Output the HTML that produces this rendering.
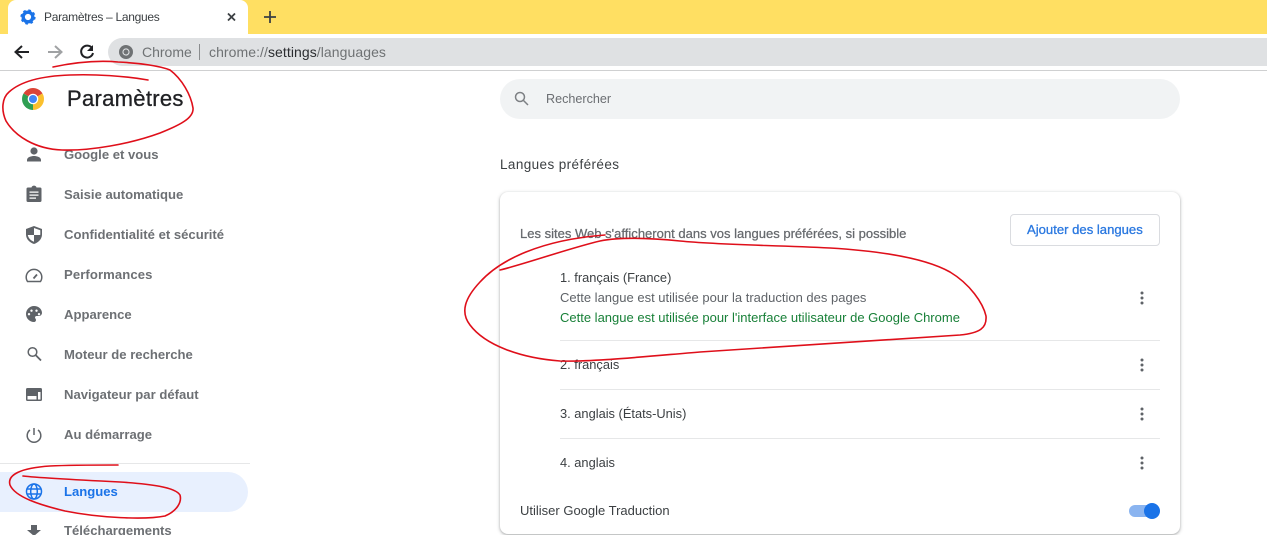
<!DOCTYPE html>
<html lang="fr"><head><meta charset="utf-8"><title>Paramètres – Langues</title>
<style>
html,body{margin:0;padding:0;background:#fff}
#p{position:relative;width:1267px;height:535px;overflow:hidden;background:#fff;font-family:"Liberation Sans",sans-serif;color:#5f6368;font-size:13px}
.t{position:absolute;white-space:nowrap;line-height:16px}
.nav{font-weight:700;color:#6d7074;left:64px;font-size:13.1px}
.dk{color:#3c4043;font-size:12.85px}
.a{position:absolute;left:0;top:0}
.hr{position:absolute;height:1px;background:#e6e7e8}
</style></head><body><div id="p">
<div style="position:absolute;left:0;top:0;width:1267px;height:34px;background:#ffdf62"></div>
<div style="position:absolute;left:8px;top:0;width:240px;height:34px;background:#fff;border-radius:8px 8px 0 0"></div>
<div style="position:absolute;left:0;top:34px;width:1267px;height:36px;background:#fff"></div>
<div style="position:absolute;left:108px;top:38px;width:1159px;height:28px;background:#dfe1e3;border-radius:14px 0 0 14px"></div>
<div style="position:absolute;left:0;top:70px;width:1267px;height:1px;background:#cfd0d1"></div>
<div class="t" style="left:44px;top:9px;font-size:12px;color:#3c4043;letter-spacing:-.3px">Paramètres – Langues</div>
<div class="t" style="left:142px;top:44px;font-size:14px;color:#6f7274">Chrome</div>
<div style="position:absolute;left:199px;top:44px;width:1px;height:16px;background:#8a8c8e"></div>
<div class="t" style="left:209px;top:44px;font-size:14px;color:#6f7274;letter-spacing:.07px">chrome://<span style="color:#2b2d30">settings</span>/languages</div>
<div class="t" style="left:67px;top:87px;font-size:22px;line-height:24px;color:#202124;letter-spacing:.3px;-webkit-text-stroke:.3px #202124">Paramètres</div>
<div style="position:absolute;left:500px;top:79px;width:680px;height:40px;border-radius:20px;background:#f1f3f4"></div>
<div class="t" style="left:546px;top:91px;font-size:12.6px;color:#6b6e72">Rechercher</div>
<div class="t" style="left:500px;top:157px;font-size:13.5px;color:#3c4043;letter-spacing:.4px">Langues préférées</div>
<div style="position:absolute;left:500px;top:192px;width:680px;height:342px;border-radius:8px;background:#fff;box-shadow:0 1px 2px rgba(60,64,67,.3),0 1px 3px 1px rgba(60,64,67,.15)"></div>
<div class="t" style="left:520px;top:226px;font-size:13px;letter-spacing:.01px;color:#66696d;-webkit-text-stroke:.25px #66696d">Les sites Web s'afficheront dans vos langues préférées, si possible</div>
<div style="position:absolute;left:1010px;top:214px;width:148px;height:30px;border:1px solid #dadce0;border-radius:4px;background:#fff"></div>
<div class="t" style="left:1027px;top:222px;font-size:13.1px;color:#2a78e0;-webkit-text-stroke:.3px #2a78e0">Ajouter des langues</div>
<div class="t dk" style="left:560px;top:270px">1. français (France)</div>
<div class="t" style="left:560px;top:290px;font-size:13px">Cette langue est utilisée pour la traduction des pages</div>
<div class="t" style="left:560px;top:310px;font-size:13px;color:#188038">Cette langue est utilisée pour l'interface utilisateur de Google Chrome</div>
<div class="hr" style="left:560px;top:340px;width:600px"></div>
<div class="t dk" style="left:560px;top:357px">2. français</div>
<div class="hr" style="left:560px;top:389px;width:600px"></div>
<div class="t dk" style="left:560px;top:406px">3. anglais (États-Unis)</div>
<div class="hr" style="left:560px;top:438px;width:600px"></div>
<div class="t dk" style="left:560px;top:455px">4. anglais</div>
<div class="t dk" style="left:520px;top:503px;font-size:13px">Utiliser Google Traduction</div>
<div style="position:absolute;left:1129px;top:505px;width:28px;height:12px;border-radius:6px;background:#8ab4f0"></div>
<div style="position:absolute;left:1144px;top:503px;width:16px;height:16px;border-radius:50%;background:#1a73e8"></div>
<div style="position:absolute;left:0;top:472px;width:248px;height:40px;border-radius:0 20px 20px 0;background:#e8f0fe"></div>
<div class="hr" style="left:0;top:463px;width:250px"></div>
<div class="t nav" style="top:147px">Google et vous</div>
<div class="t nav" style="top:187px">Saisie automatique</div>
<div class="t nav" style="top:227px">Confidentialité et sécurité</div>
<div class="t nav" style="top:267px;letter-spacing:.1px">Performances</div>
<div class="t nav" style="top:307px">Apparence</div>
<div class="t nav" style="top:347px">Moteur de recherche</div>
<div class="t nav" style="top:387px">Navigateur par défaut</div>
<div class="t nav" style="top:427px">Au démarrage</div>
<div class="t nav" style="top:484px;color:#1a73e8">Langues</div>
<div class="t nav" style="top:523px">Téléchargements</div>
<svg class="a" width="1267" height="535" viewBox="0 0 1267 535" xmlns="http://www.w3.org/2000/svg">
<!-- tab gear -->
<g transform="translate(28,17)"><circle r="4.800" fill="none" stroke="#1a73e8" stroke-width="3.400"/><circle r="6.600" fill="none" stroke="#1a73e8" stroke-width="2" stroke-dasharray="2.600 2.600"/></g>
<path d="M228 13.500l7 7M235 13.500l-7 7" stroke="#3c4043" stroke-width="1.800"/>
<path d="M270 11v12M264 17h12" stroke="#3c4043" stroke-width="1.800"/>
<!-- nav arrows -->
<path d="M29 52H16M22 46l-6.500 6 6.500 6" fill="none" stroke="#202124" stroke-width="2"/>
<path d="M48 52h13M55 46l6.500 6-6.500 6" fill="none" stroke="#a0a2a4" stroke-width="2"/>
<path d="M92 48a6 6 0 1 0 1 5" fill="none" stroke="#202124" stroke-width="2"/><path d="M93 45v6h-6z" fill="#202124"/>
<!-- omnibox chrome icon -->
<circle cx="126" cy="52" r="7" fill="#6f7274"/><circle cx="126" cy="52" r="3.600" fill="#dfe1e3"/><circle cx="126" cy="52" r="2.500" fill="#6f7274"/>
<!-- logo -->
<path d="M33 99L23.500 93.500A11 11 0 0 1 42.500 93.500Z" fill="#db4437"/>
<path d="M33 99L42.500 93.500A11 11 0 0 1 33 110Z" fill="#fbc02d"/>
<path d="M33 99L33 110A11 11 0 0 1 23.500 93.500Z" fill="#2f9e52"/>
<circle cx="33" cy="99" r="5.300" fill="#fff"/><circle cx="33" cy="99" r="4" fill="#4285f4"/>
<!-- search -->
<circle cx="520" cy="97" r="4.500" fill="none" stroke="#7d8084" stroke-width="1.500"/><path d="M523.500 100.500l4.500 4.500" stroke="#7d8084" stroke-width="1.500"/>
<!-- sidebar icons -->
<g fill="#5f6368">
<circle cx="34" cy="151" r="3.600"/><path d="M27 161.500v-1.500c0-3 4.500-4 7-4s7 1 7 4v1.500z"/>
<path fill-rule="evenodd" d="M28 187.500h3.500a2.600 2.600 0 0 1 5 0h3.500a1.500 1.500 0 0 1 1.500 1.500v11.500a1.500 1.500 0 0 1-1.500 1.500H28a1.500 1.500 0 0 1-1.500-1.500V189a1.500 1.500 0 0 1 1.500-1.500zM29.500 191.500v1.300h9v-1.300zM29.500 194.500v1.300h9v-1.300zM29.500 197.500v1.300h6.500v-1.300z"/>
<path fill-rule="evenodd" d="M34 226l8 3v5.500c0 4.500-3.500 8-8 9.500-4.500-1.500-8-5-8-9.500V229zM34 228v7h6.200c.1-.5.1-1 .1-1.500v-3.200zM34 235h-6.200c.6 3.200 3 5.600 6.200 6.800z"/>
<path fill-rule="evenodd" d="M34 306a8 8 0 0 0 0 16c1.300 0 2-.9 2-2 0-1.200-1-1.500-1-2.500 0-.8.700-1.500 1.500-1.500H39a3 3 0 0 0 3-3c0-4-3.600-7-8-7zM29 313a1.200 1.200 0 1 0 .01 0zM31.500 309.500a1.200 1.200 0 1 0 .01 0zM36.500 309.500a1.200 1.200 0 1 0 .01 0zM39 313a1.200 1.200 0 1 0 .01 0z"/>
<path fill-rule="evenodd" d="M27.500 388h13a1.500 1.500 0 0 1 1.500 1.500v10a1.500 1.500 0 0 1-1.500 1.500h-13a1.500 1.500 0 0 1-1.500-1.500v-10a1.500 1.500 0 0 1 1.500-1.500zM27.500 392v7.500h9v-3.500h-9zM38 392v7.500h2.500V392z"/>
<path d="M31 525h6v5h4l-7 6-7-6h4z"/>
</g>
<g fill="none" stroke="#5f6368" stroke-width="1.500">
<path d="M27.500 281.500a7.800 7.800 0 1 1 13 0z"/><path d="M33.500 278.500l3.500-4" stroke-width="1.800"/>
<circle cx="32.500" cy="352" r="4.300"/><path d="M35.800 355.300l5.200 5.200" stroke-width="1.800"/>
<path d="M34 428v7"/><path d="M30 430a6.800 6.800 0 1 0 8 0"/>
</g>
<!-- globe -->
<g fill="none" stroke="#1a73e8" stroke-width="1.500"><circle cx="34" cy="491.500" r="7.500"/><ellipse cx="34" cy="491.500" rx="3.300" ry="7.500"/><path d="M26.500 489h15M26.500 494h15"/></g>
<!-- kebabs -->
<g fill="#5f6368">
<circle cx="1142" cy="293" r="1.500"/><circle cx="1142" cy="298" r="1.500"/><circle cx="1142" cy="303" r="1.500"/>
<circle cx="1142" cy="360" r="1.500"/><circle cx="1142" cy="365" r="1.500"/><circle cx="1142" cy="370" r="1.500"/>
<circle cx="1142" cy="409" r="1.500"/><circle cx="1142" cy="414" r="1.500"/><circle cx="1142" cy="419" r="1.500"/>
<circle cx="1142" cy="458" r="1.500"/><circle cx="1142" cy="463" r="1.500"/><circle cx="1142" cy="468" r="1.500"/>
</g>
<!-- red annotations -->
<g fill="none" stroke="#df0f1a" stroke-width="1.600" stroke-linecap="round" stroke-linejoin="round">
<path d="M53 67C72 63 95 60 118 62C140 63 160 66 170 70C182 79 191 95 193 108C194 118 180 125 160 133C130 144 90 151 62 150C35 149 15 136 6 121C1 110 2 98 9 92C20 82 40 76 70 75C95 74 125 76 148 80"/>
<path d="M500 270C525 264 570 248 600 241C620 237 650 238 680 241C720 245 770 245 830 248C880 251 925 258 950 272C970 284 983 303 986 316C987 328 980 333 960 335C900 339 800 345 700 352C640 357 590 362 560 361C520 358 485 345 470 325C460 312 465 298 480 282C500 260 540 240 605 235"/>
<path d="M23 476C40 478 80 480 120 482C150 484 175 487 180 495C182 502 177 511 165 516C145 520 100 518 65 511C40 505 15 497 10 485C7 475 20 468 50 466C70 465 95 465 118 465"/>
</g>
</svg>
</div></body></html>
